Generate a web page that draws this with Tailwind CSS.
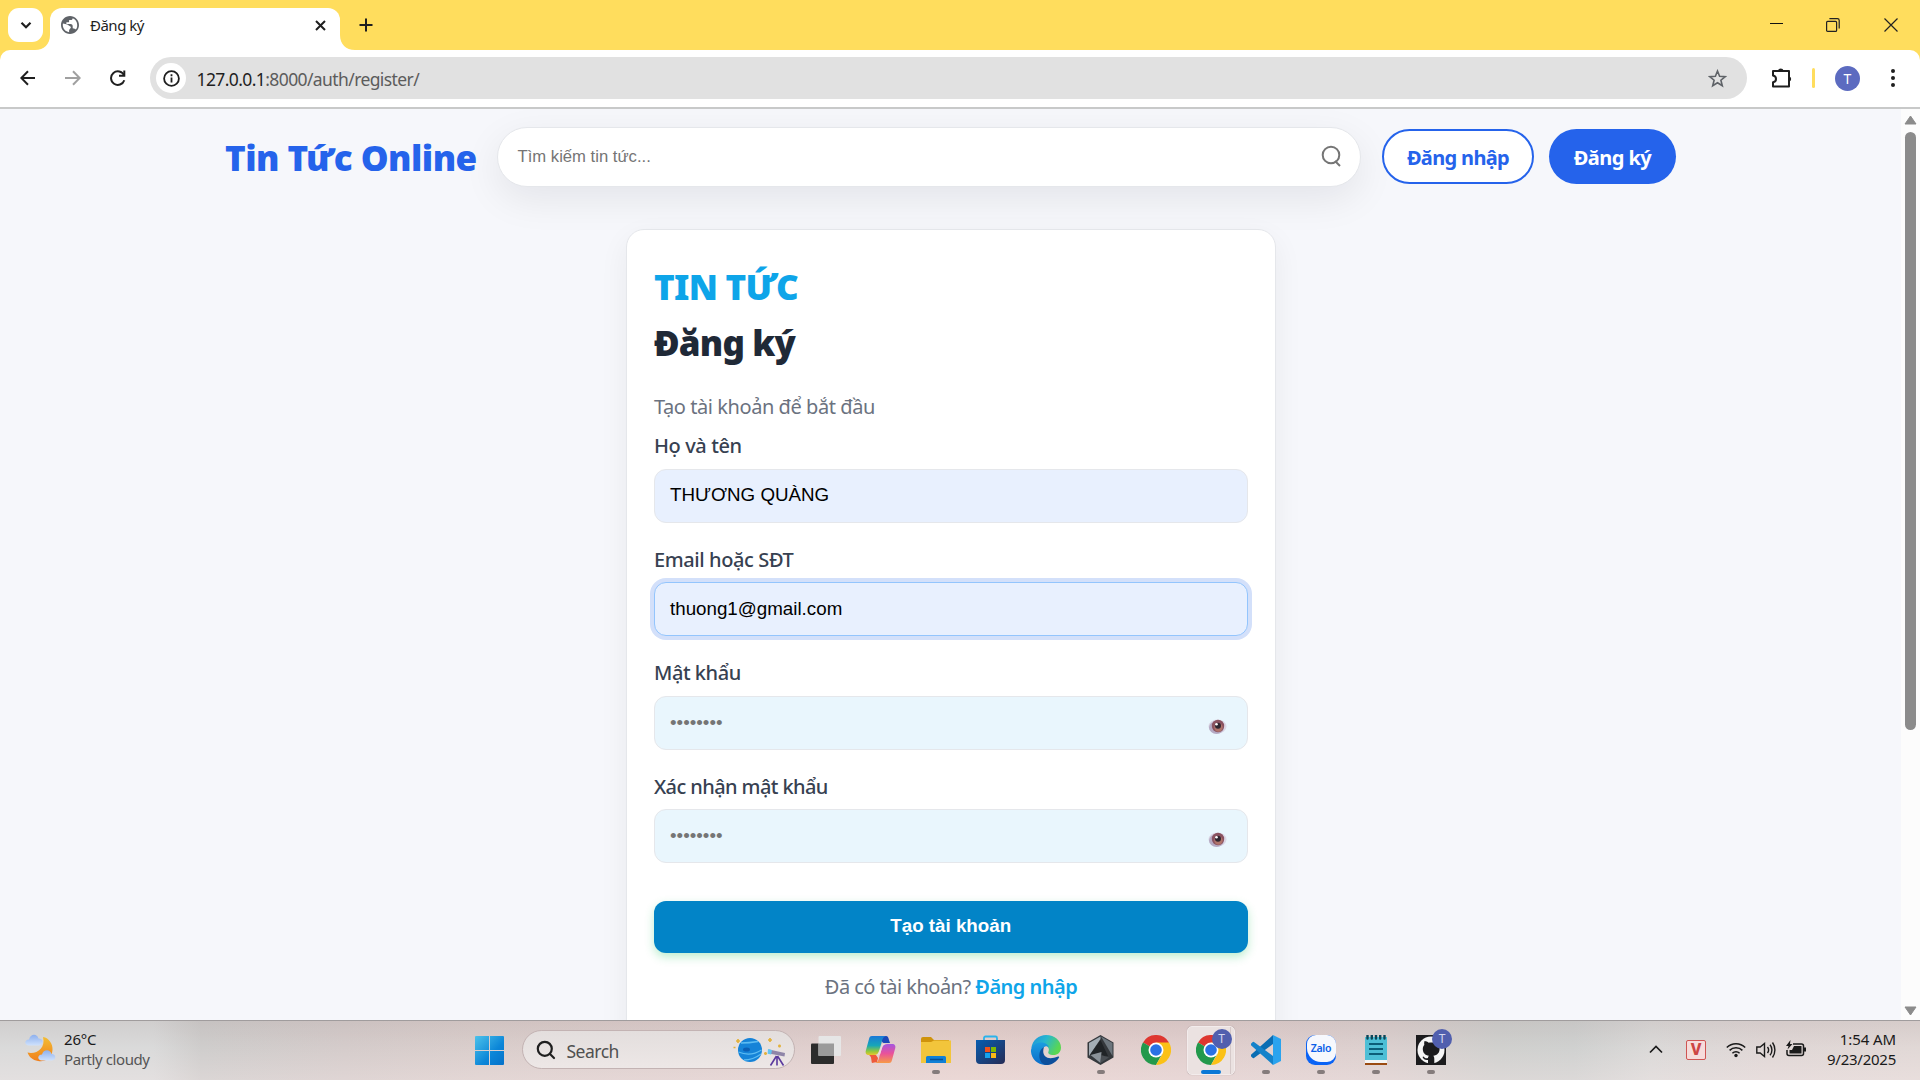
<!DOCTYPE html>
<html lang="vi">
<head>
<meta charset="utf-8">
<title>Đăng ký</title>
<script src="https://cdn.jsdelivr.net/npm/@tailwindcss/browser@4"></script>
</head>
<body class="w-[1920px] h-[1080px] overflow-hidden flex flex-col bg-[#f6f7fb] font-['Noto_Sans',sans-serif]">

<!-- Tab strip -->
<div class="h-[50px] shrink-0 bg-[#ffdd5d] flex items-start">
  <div class="ml-2 mt-2 w-[35px] h-[34px] rounded-[11px] bg-white flex items-center justify-center">
    <svg class="size-3" viewBox="0 0 12 12" fill="none" stroke="#1f1f1f" stroke-width="2.2"><path d="M1.500 3.800 6 8.200l4.500-4.400"/></svg>
  </div>
  <svg class="w-[15px] h-[15px] mt-[35px] -ml-2 shrink-0" viewBox="0 0 15 15"><path d="M15 0C15 9 9 15 0 15h15z" fill="#fff"/></svg>
  <div class="mt-[7.500px] w-[290px] h-[43px] rounded-t-[12px] bg-white flex items-start">
    <svg class="ml-[11px] mt-[8.500px] size-[18px]" viewBox="2 2 20 20"><path d="M12 2C6.480 2 2 6.480 2 12s4.480 10 10 10 10-4.480 10-10S17.520 2 12 2zm-1 17.930c-3.950-.490-7-3.850-7-7.930 0-.620.080-1.210.210-1.790L9 11.500l2.500 1.500c1.500.500 2 1.500 1 2.500l-1.500 2zM18.500 17c-.800-1-1.800-1-3.500-1.500v-2.500c0-1-1-2-2.500-2H8v-2h2c.550 0 1-.450 1-1V6.500h2c1.100 0 2-.900 2-2v.100c2.930 1.190 5 4.060 5 7.410 0 2.080-.300 3.670-1.500 4.990z" fill="#5f6368"/></svg>
    <span class="ml-[11px] mt-[7.500px] text-[15px] leading-5 tracking-[-0.500px] text-[#1f1f1f]">Đăng ký</span>
    <svg class="ml-auto mr-[14.500px] mt-[12px] size-[11px]" viewBox="0 0 11 11" stroke="#1f1f1f" stroke-width="2"><path d="m1 1 9 9M10 1l-9 9"/></svg>
  </div>
  <svg class="w-[15px] h-[15px] mt-[35px] shrink-0" viewBox="0 0 15 15"><path d="M0 0c0 9 6 15 15 15H0z" fill="#fff"/></svg>
  <svg class="ml-[4px] mt-[18px] size-[14px]" viewBox="0 0 14 14" stroke="#1f1f1f" stroke-width="2"><path d="M7 .500v13M.500 7h13"/></svg>
  <div class="ml-auto flex items-start">
    <svg class="w-[13px] h-[13px] mt-[18px]" viewBox="0 0 13 13"><path d="M0 5.500h13" stroke="#111"/></svg>
    <svg class="w-[14px] h-[14px] mt-[18px] ml-[43px]" viewBox="0 0 14 14" fill="none" stroke="#222" stroke-width="1.200"><rect x=".600" y="3.400" width="10" height="10" rx="1"/><path d="M3.400.700h8a1.800 1.800 0 0 1 1.800 1.800v8"/></svg>
    <svg class="w-[14px] h-[14px] mt-[18px] ml-[44px] mr-[22px]" viewBox="0 0 14 14" stroke="#222" stroke-width="1.200"><path d="m.500.500 13 13M13.500.500l-13 13"/></svg>
  </div>
</div>

<!-- Toolbar -->
<div class="h-[59px] shrink-0 bg-[#ffdd5d]">
  <div class="h-full bg-white rounded-t-[10px] border-b-2 border-[#c8c9c9] flex items-center pb-px">
    <svg class="ml-[20px] w-[16px] h-[16px]" viewBox="0 0 16 16" fill="none" stroke="#1f1f1f" stroke-width="2"><path d="M15 8H1.500M8 1.200 1.300 8 8 14.800"/></svg>
    <svg class="ml-[29px] w-[16px] h-[16px]" viewBox="0 0 16 16" fill="none" stroke="#a0a0a0" stroke-width="2"><path d="M0 8h14.500M8 1.200 14.700 8 8 14.800"/></svg>
    <svg class="ml-[29px] w-[16px] h-[16px]" viewBox="0 0 16 16" fill="none" stroke="#1f1f1f" stroke-width="2"><path d="M14.300 10.200A6.800 6.800 0 1 1 14 5.200"/><path d="M14.300.500v5.300H9"/></svg>
    <div class="ml-[24px] w-[1597px] h-[42px] rounded-full bg-[#e1e1e1] flex items-center">
      <div class="ml-[6px] size-[30px] rounded-full bg-white flex items-center justify-center">
        <svg class="size-[17px]" viewBox="0 0 17 17" fill="none" stroke="#1f1f1f" stroke-width="1.800"><circle cx="8.500" cy="8.500" r="7.400"/><path d="M8.500 7.500v5M8.500 4.300v1.900"/></svg>
      </div>
      <span class="ml-[10.500px] mt-[2px] text-[17.500px] leading-6 tracking-[-0.600px] text-[#5c5c5c]"><span class="text-[#1f1f1f]">127.0.0.1</span>:8000/auth/register/</span>
      <svg class="ml-auto mr-[20px] w-[19px] h-[19px]" viewBox="0 0 19 19" fill="none" stroke="#5f6368" stroke-width="1.600"><path d="m9.500 2 2.100 5.200 5.600.400-4.300 3.600 1.400 5.500-4.800-3-4.800 3 1.400-5.500L1.800 7.600l5.600-.400z"/></svg>
    </div>
    <svg class="ml-[24px] w-[22px] h-[21px]" viewBox="0 0 22 21"><path d="M2 3h16v15.500H2v-4.200c4-.500 4-6 0-6.800z" fill="none" stroke="#1f1f1f" stroke-width="2" stroke-linejoin="round"/><path d="M7 2.500a2.800 2.500 0 0 1 5.500 0zM18.500 8.500a2.700 2.700 0 0 1 0 5z" fill="#1f1f1f"/></svg>
    <div class="ml-[19px] w-[3px] h-5 rounded bg-[#ffdd5d]"></div>
    <div class="ml-[20px] size-[25px] rounded-full bg-[#5c6bc0] text-white text-[14px] leading-[25px] text-center">T</div>
    <svg class="ml-[30.500px] w-[4px] h-[18px]" viewBox="0 0 4 18" fill="#1f1f1f"><circle cx="2" cy="2" r="2"/><circle cx="2" cy="9" r="2"/><circle cx="2" cy="16" r="2"/></svg>
  </div>
</div>

<!-- Page viewport -->
<div class="h-[911px] shrink-0 flex overflow-hidden">
  <main class="w-[1901px]">
    <header class="pt-[18px] pl-[225px] flex items-start">
      <div class="w-[271.500px] pt-[9px]"><span class="text-[35px] leading-[44px] font-black text-[#2563eb] tracking-[-0.520px] whitespace-nowrap">Tin Tức Online</span></div>
      <div class="w-[864.500px] h-[60px] rounded-[30px] bg-white border border-[#e5e7eb] shadow-[0_12px_38px_rgba(2,6,23,0.08)] flex items-start">
        <span class="ml-5 mt-[17px] text-[16.670px] leading-6 text-[#757575] font-['Liberation_Sans',sans-serif]">Tìm kiếm tin tức...</span>
        <svg class="ml-auto mr-[18px] mt-[17px] w-[21px] h-[23px]" viewBox="0 0 21 23" fill="none" stroke="#757575" stroke-width="2"><circle cx="10" cy="10" r="8.300"/><path d="m14 16 5 5"/></svg>
      </div>
      <div class="ml-[21px] mt-[2px] w-[152px] h-[55px] rounded-[28px] bg-white border-2 border-[#2563eb] text-[#2563eb] flex justify-center"><span class="mt-[12.500px] text-[20px] leading-7 font-bold tracking-[-0.650px] whitespace-nowrap">Đăng nhập</span></div>
      <div class="ml-[15px] mt-[2px] w-[127px] h-[55px] rounded-[28px] bg-[#2563eb] text-white flex justify-center"><span class="mt-[14.500px] text-[20px] leading-7 font-bold tracking-[-0.550px] whitespace-nowrap">Đăng ký</span></div>
    </header>

    <section class="ml-[626px] mt-[42px] w-[650px] h-[820px] rounded-[18px] bg-white border border-[#e5e7eb] shadow-[0_10px_30px_rgba(2,6,23,0.06)] px-[27px] pt-[35px]">
      <div class="h-11"><span class="text-[35px] leading-[44px] font-black tracking-[-0.700px] text-[#0ea5e9]">TIN TỨC</span></div>
      <div class="mt-3 h-11"><span class="text-[35px] leading-[44px] font-black tracking-[-0.850px] text-[#1f2937]">Đăng ký</span></div>
      <div class="mt-7 h-[28px]"><span class="text-[20px] leading-7 tracking-[-0.440px] text-[#6b7280]">Tạo tài khoản để bắt đầu</span></div>

      <div class="mt-[11px] h-[114px] flex flex-col items-start">
        <span class="text-[20px] leading-7 font-medium tracking-[-0.400px] text-[#374151]">Họ và tên</span>
        <div class="mt-[9px] w-[593.500px] h-[54px] rounded-[12px] border border-[#e5e7eb] bg-[#e8f0fe] pl-[15px] pt-[11px]"><span class="text-[18.750px] leading-7 text-black font-['Liberation_Sans',sans-serif]">THƯƠNG QUÀNG</span></div>
      </div>
      <div class="h-[113px] flex flex-col items-start">
        <span class="text-[20px] leading-7 font-medium tracking-[-0.400px] text-[#374151]">Email hoặc SĐT</span>
        <div class="mt-[8px] w-[593.500px] h-[54px] rounded-[12px] border border-[#93c5fd] bg-[#e8f0fe] shadow-[0_0_0_4px_#d3e0fa] pl-[15px] pt-[12px]"><span class="text-[18.750px] leading-7 text-black font-['Liberation_Sans',sans-serif]">thuong1@gmail.com</span></div>
      </div>
      <div class="h-[114px] flex flex-col items-start">
        <span class="text-[20px] leading-7 font-medium tracking-[-0.450px] text-[#374151]">Mật khẩu</span>
        <div class="mt-[9px] w-[593.500px] h-[54px] rounded-[12px] border border-[#e5e7eb] bg-[#e9f6fd] pl-[15px] pr-[19.500px] flex items-start">
          <span class="mt-[12px] text-[18.750px] leading-7 text-[#757575] font-['Liberation_Sans',sans-serif]">••••••••</span>
          <svg class="ml-auto mt-[21px] w-[19px] h-[17px]" viewBox="0 0 19 17"><ellipse cx="9.500" cy="8.500" rx="9" ry="7" fill="#dcd8e6"/><ellipse cx="8.500" cy="9.500" rx="7.500" ry="6.500" fill="#b5aac4"/><circle cx="10" cy="8" r="6.200" fill="#8a5260"/><circle cx="10.500" cy="9.500" r="4.200" fill="#b0746b"/><circle cx="10" cy="7.800" r="3" fill="#2e2530"/><circle cx="8.500" cy="6.300" r="1.300" fill="#fff"/></svg>
        </div>
      </div>
      <div class="h-[90px] flex flex-col items-start">
        <span class="text-[20px] leading-7 font-medium tracking-[-0.600px] text-[#374151]">Xác nhận mật khẩu</span>
        <div class="mt-[8px] w-[593.500px] h-[54px] rounded-[12px] border border-[#e5e7eb] bg-[#e9f6fd] pl-[15px] pr-[19.500px] flex items-start">
          <span class="mt-[12px] text-[18.750px] leading-7 text-[#757575] font-['Liberation_Sans',sans-serif]">••••••••</span>
          <svg class="ml-auto mt-[21px] w-[19px] h-[17px]" viewBox="0 0 19 17"><ellipse cx="9.500" cy="8.500" rx="9" ry="7" fill="#dcd8e6"/><ellipse cx="8.500" cy="9.500" rx="7.500" ry="6.500" fill="#b5aac4"/><circle cx="10" cy="8" r="6.200" fill="#8a5260"/><circle cx="10.500" cy="9.500" r="4.200" fill="#b0746b"/><circle cx="10" cy="7.800" r="3" fill="#2e2530"/><circle cx="8.500" cy="6.300" r="1.300" fill="#fff"/></svg>
        </div>
      </div>
      <div class="mt-[38px] w-[593.500px] h-[52px] rounded-[12px] bg-[#0284c7] shadow-[0_4px_10px_rgba(34,197,94,0.3)] flex justify-center"><span class="mt-[11px] text-[18.750px] leading-7 font-bold text-white font-['Liberation_Sans',sans-serif]">Tạo tài khoản</span></div>
      <div class="mt-[20px] flex justify-center text-[20px] leading-7 tracking-[-0.520px] text-[#6b7280] whitespace-pre"><span>Đã có tài khoản? </span><span class="font-semibold text-[#0ea5e9]">Đăng nhập</span></div>
    </section>
  </main>
  <div class="w-[19px] bg-[#fcfcfc] flex flex-col items-center">
    <svg class="mt-[6px] w-[13px] h-[10px]" viewBox="0 0 13 10"><path d="M6.500 1 12 9H1z" fill="#8b8b8b" stroke="#8b8b8b" stroke-linejoin="round"/></svg>
    <div class="mt-[7px] w-[11px] h-[598px] rounded-full bg-[#8b8b8b]"></div>
    <svg class="mt-auto mb-[4px] w-[13px] h-[10px]" viewBox="0 0 13 10"><path d="M6.500 9 12 1H1z" fill="#8b8b8b" stroke="#8b8b8b" stroke-linejoin="round"/></svg>
  </div>
</div>

<!-- Taskbar -->
<div class="h-[60px] shrink-0 border-t border-[#a09c9d] bg-[linear-gradient(180deg,rgba(120,100,100,0.1)_0%,rgba(255,240,240,0)_45%,rgba(255,240,240,0.25)_100%),linear-gradient(90deg,#dadada_0%,#dadada_8%,#cfcdcc_10.5%,#d5cccb_18%,#dacecc_25%,#dfcfce_40%,#e4d0cd_50%,#e1cfce_62%,#dcd0cf_72%,#d0d0ce_78%,#d0d1d0_82%,#dbd9d8_86%,#e0d7d6_92%,#e1d8d6_100%)] flex items-start">
  <svg class="ml-[25px] mt-[12px] w-[31px] h-[30px] shrink-0" viewBox="0 0 31 30"><defs><linearGradient id="mo" x1="0" y1="0" x2="0" y2="1"><stop offset="0" stop-color="#f3bd33"/><stop offset="1" stop-color="#f07f1c"/></linearGradient><linearGradient id="cl" x1="0" y1="0" x2="0" y2="1"><stop offset="0" stop-color="#8db0ee"/><stop offset="1" stop-color="#cfe1fc"/></linearGradient></defs><path d="M18 4C24 5 28 11 27.500 17 27 25 20 29.500 13 28 7.500 27 4 24 2.500 19.500 11 21.500 21 16 18 4z" fill="url(#mo)"/><path d="M4 12.500c-5 0-5-6 0-6C5 1 12 0 13.500 5.500c6 0 5 7 0 7z" fill="url(#cl)"/><path d="M17 27.500c-5 0-5-6 0-6 1-5 8-6 9.500-.500 5 0 5 6.500 0 6.500z" fill="url(#cl)"/></svg>
  <div class="ml-[8px] mt-[8px] w-[111px] flex flex-col items-start text-[15px] leading-5 whitespace-nowrap"><span class="tracking-[-0.200px] text-[#1a1a1a]">26°C</span><span class="tracking-[-0.400px] text-[#555]">Partly cloudy</span></div>

  <svg class="ml-[300px] mt-[15px] w-[29px] h-[29px] shrink-0" viewBox="0 0 29 29"><defs><linearGradient id="wi" x1="0" y1="0" x2="1" y2="1"><stop offset="0" stop-color="#4cc2ea"/><stop offset=".6" stop-color="#0b86d8"/><stop offset="1" stop-color="#0471c9"/></linearGradient></defs><path d="M0 1a1 1 0 0 1 1-1h13v14H0zM15 0h13a1 1 0 0 1 1 1v13H15zM0 15h14v14H1a1 1 0 0 1-1-1zM15 15h14v13a1 1 0 0 1-1 1H15z" fill="url(#wi)"/></svg>
  <div class="ml-[18px] mt-[9px] w-[273px] h-[39px] shrink-0 rounded-full bg-[linear-gradient(180deg,#e3dedd,#ede7e6)] border border-[#c3b3b3] flex items-start">
    <svg class="ml-[13px] mt-[9px] size-[20px]" viewBox="0 0 20 20" fill="none" stroke="#1f1f1f" stroke-width="2.200" stroke-linecap="round"><circle cx="8.800" cy="8.800" r="7"/><path d="m14 14 4 4"/></svg>
    <span class="ml-[10.500px] mt-[8px] text-[17.500px] leading-6 tracking-[-0.500px] text-[#505050]">Search</span>
    <svg class="ml-auto mr-[8px] mt-[6px] w-[54px] h-[29px]" viewBox="0 0 54 29"><circle cx="18" cy="13" r="12" fill="#1583d8"/><path d="M9 6q8 0 17-1.500M6.500 15q12 5 23-2M12 23q9 0 17-6" stroke="#5dbcf2" stroke-width="1.300" fill="none"/><ellipse cx="14.500" cy="12.500" rx="3.500" ry="2" fill="#0b5fb5"/><path d="M4 4h4M6 2v4M1.500 10.500h2M36 3h4M38 1v4M46 9h3M47.500 7.500v3M32 16.500h3M33.500 15v3" stroke="#e3b23c" stroke-width="1.700"/><path d="m37 12.500 16 3.500-.500 3.500L37 16.500z" fill="#8f86a8"/><path d="m36 12 4 1-.800 4.500-3.600-.800z" fill="#63c4f0"/><path d="M45 19v9.500M44.500 19l-6 9.500M45.500 19l6 9.500" stroke="#5b3a9e" stroke-width="1.600"/></svg>
  </div>

  <!-- Pinned apps, one 55px cell each -->
  <div class="ml-[3px] flex h-[59px] shrink-0">
    <div class="w-[55px] pt-[15px] flex flex-col items-center"><svg class="w-[30px] h-[30px]" viewBox="0 0 30 30"><rect x="0" y="7.500" width="23" height="20.500" rx="1" fill="#2c2c2c"/><rect x="7.500" y="0" width="22.500" height="20" rx="1" fill="#e6e6e6"/><path d="M7.500 7.500H23V20H7.500z" fill="#9b9b9b"/></svg></div>
    <div class="w-[55px] pt-[14px] flex flex-col items-center"><svg class="w-[31px] h-[29px]" viewBox="0 0 31 29"><defs><linearGradient id="ca" x1="0" y1="0" x2="0" y2="1"><stop offset="0" stop-color="#1a78d8"/><stop offset=".5" stop-color="#17a6b8"/><stop offset=".8" stop-color="#8fc83e"/><stop offset="1" stop-color="#e8c62a"/></linearGradient><linearGradient id="cb" x1="0" y1="0" x2="0" y2="1"><stop offset="0" stop-color="#a557e0"/><stop offset=".5" stop-color="#e9529a"/><stop offset="1" stop-color="#f79a46"/></linearGradient></defs><path d="M18 1h3c2 0 2.500 2 3 4l1 3h-6c-3 0-3-7-1-7z" fill="#1b48b8"/><path d="M7 28c-1-3 0-6-3-8h7l2 3-1 4z" fill="#ee5a3b"/><path d="M7 1h14c-3 1-3.500 3-4.500 7l-2.500 8c-1 3-2 4-5 4H4c-3 0-4-2-3-5L4 4c.5-2 1-3 3-3z" fill="url(#ca)"/><path d="M24 28H10c3-1 3.500-3 4.500-7l2.500-8c1-3 2-4 5-4h5c3 0 4 2 3 5l-3 11c-.5 2-1 3-3 3z" fill="url(#cb)"/><path d="M17.500 9h4.500c-3 0-4 1-5 4l-2 6.500h-4.500c2 0 3-1 3.500-3z" fill="#ecdcdc"/></svg></div>
    <div class="w-[55px] pt-[15px] flex flex-col items-center"><svg class="w-[30px] h-[29px]" viewBox="0 0 30 29"><path d="M0 3a2 2 0 0 1 2-2h8l3 3h15v10H0z" fill="#cf930c"/><path d="M0 6h10l3-1.500h17V27H0z" fill="#f2c53b"/><path d="M5 27v-5.500A1.500 1.500 0 0 1 6.500 20h17a1.500 1.500 0 0 1 1.500 1.500V27z" fill="#1080d6"/><path d="M9 23.500h13" stroke="#0a4f92" stroke-width="1.500"/></svg><div class="mt-[5px] w-2 h-1 rounded-full bg-[#857c7c]"></div></div>
    <div class="w-[55px] pt-[14px] flex flex-col items-center"><svg class="w-[29px] h-[30px]" viewBox="0 0 29 30"><defs><linearGradient id="st" x1="0" y1="0" x2="1" y2="1"><stop offset="0" stop-color="#075db0"/><stop offset="1" stop-color="#272c55"/></linearGradient></defs><path d="M8 6V3a1.500 1.500 0 0 1 1.500-1.500h10A1.500 1.500 0 0 1 21 3v3" fill="none" stroke="#2bb3ec" stroke-width="1.800"/><path d="M0 5h29v20a4 4 0 0 1-4 4H4a4 4 0 0 1-4-4z" fill="url(#st)"/><path d="M9 12h5v5H9z" fill="#f1511b"/><path d="M15 12h5v5h-5z" fill="#80b900"/><path d="M9 18h5v5H9z" fill="#14a3ee"/><path d="M15 18h5v5h-5z" fill="#fbb916"/></svg></div>
    <div class="w-[55px] pt-[14px] flex flex-col items-center"><svg class="w-[30px] h-[30px]" viewBox="0 0 30 30"><defs><linearGradient id="ea" x1="0" y1="0" x2="1" y2=".4"><stop offset="0" stop-color="#1e8fdc"/><stop offset=".5" stop-color="#27b7cf"/><stop offset="1" stop-color="#5ad653"/></linearGradient><linearGradient id="eb" x1="0" y1="0" x2="0" y2="1"><stop offset="0" stop-color="#1b9de0"/><stop offset="1" stop-color="#0b6cc9"/></linearGradient></defs><path d="M.300 13C1.500 5 8 0 15 0c9 0 15 6 15 12.500 0 5-3.500 7.500-7.500 7.500-4 0-6-1.500-5-3.500 1.500-3-1-6.500-6-6.500-5 0-8 1-11.200 3z" fill="url(#ea)"/><path d="M0 15C1 10 5 7.500 10 7.500c4 0 7 2 8 4.500-3-2-7 0-7 5 0 7 5 10 9 10.500C18 29.500 16 30 14 30 6 29.500-.500 23 0 15z" fill="url(#eb)"/><path d="M13 12c-3 9 3 14 14 9.500 1-.300 1.500.300 1 1C25.500 27 20 30.500 15 30 7 29 6 15 13 12z" fill="#0c4f9c"/></svg></div>
    <div class="w-[55px] pt-[14px] flex flex-col items-center"><svg class="w-[27px] h-[30px]" viewBox="0 0 27 30"><path d="m13.500 0 13 7.500v15l-13 7.500-13-7.500v-15z" fill="#34383c"/><path d="M13.500 1.500 2 8v13l11.500-17z" fill="#a3adb5"/><path d="M14 1.500 25.500 8v13z" fill="#6d767d"/><path d="m13.500 5 7.500 16-18-1z" fill="#202427"/><path d="m3.500 20 11-3-1 11z" fill="#8a9299"/><path d="m13.500 28 .5-8 8 2.500z" fill="#4a4f54"/></svg><div class="mt-[5px] w-2 h-1 rounded-full bg-[#857c7c]"></div></div>
    <div class="w-[55px] pt-[14px] flex flex-col items-center"><svg class="w-[30px] h-[30px]" viewBox="0 0 30 30"><path d="M15 15 2 7.500A15 15 0 0 1 28 7.500z" fill="#de3730"/><path d="M15 15 2 7.500A15 15 0 0 0 15 30l6-11z" fill="#23994c"/><path d="M15 7.500h13A15 15 0 0 1 15 30l6.500-11z" fill="#fbc116"/><circle cx="15" cy="15" r="7.500" fill="#fff"/><circle cx="15" cy="15" r="5.800" fill="#2a72e4"/></svg></div>
    <div class="w-[55px] pt-[5px] flex flex-col items-center">
      <div class="relative w-[48px] h-[49px] rounded-[5px] bg-[#ebe2e1] border border-[#f3ecec] shadow-[0_0_1px_#a99] flex flex-col items-center pt-[8px]"><div class="absolute right-[3px] top-0 w-px h-[47px] bg-[#d5c9c9]"></div><svg class="w-[30px] h-[30px] shrink-0" viewBox="0 0 30 30"><path d="M15 15 2 7.500A15 15 0 0 1 28 7.500z" fill="#de3730"/><path d="M15 15 2 7.500A15 15 0 0 0 15 30l6-11z" fill="#23994c"/><path d="M15 7.500h13A15 15 0 0 1 15 30l6.500-11z" fill="#fbc116"/><circle cx="15" cy="15" r="7.500" fill="#fff"/><circle cx="15" cy="15" r="5.800" fill="#2a72e4"/></svg><div class="mt-[5px] w-5 h-1 rounded-full bg-[#0a78d6]"></div>
      <div class="absolute left-[24px] top-[2px] size-5 rounded-full bg-[#515fae] text-[#d3d7ee] text-[12px] leading-5 text-center">T</div></div></div>
    <div class="w-[55px] pt-[14px] flex flex-col items-center"><svg class="w-[30px] h-[30px]" viewBox="0 0 30 30"><path d="M0 19.800 22 0v9L3 23q-.800.500-1.500-.200L.200 21.500q-.800-.900-.200-1.700z" fill="#0a6db3"/><path d="M0 10.200 22 30v-9L3 7q-.800-.500-1.500.200L.200 8.500q-.800.900-.200 1.700z" fill="#1482ca"/><path d="M22 0 30 4v22l-8 4z" fill="#2aa3ee"/></svg><div class="mt-[5px] w-2 h-1 rounded-full bg-[#857c7c]"></div></div>
    <div class="w-[55px] pt-[14px] flex flex-col items-center"><div class="size-[30px] rounded-[9px] bg-[#0a63f5] flex justify-end"><div class="w-[29px] h-[27px] rounded-[9px] rounded-bl-[14px] bg-[#f6f8fd] text-[#0b5fe8] text-[10.500px] font-semibold leading-[27px] text-center tracking-[-0.300px]">Zalo</div></div><div class="mt-[5px] w-2 h-1 rounded-full bg-[#857c7c]"></div></div>
    <div class="w-[55px] pt-[14px] flex flex-col items-center"><svg class="w-[24px] h-[30px]" viewBox="0 0 24 30"><path d="M1 2h22v25H1z" fill="#4dbfd6"/><path d="M1 25h22v3H1z" fill="#f4f4f4"/><path d="M1 28h22v2H1z" fill="#9a4b12"/><path d="M5 9h14M5 14h14M5 19h14" stroke="#0c5e78" stroke-width="1.800"/><path d="M3.500.500v3M7.800.500v3M12 .500v3M16.200.500v3M20.500.500v3" stroke="#0c4658" stroke-width="2.400" stroke-linecap="round"/></svg><div class="mt-[5px] w-2 h-1 rounded-full bg-[#857c7c]"></div></div>
    <div class="relative w-[55px] pt-[14px] flex flex-col items-center"><svg class="w-[30px] h-[30px]" viewBox="0 0 30 30"><path d="M0 0h30v30H0z" fill="#1b1b1d"/><circle cx="15" cy="15" r="13.500" fill="#f5f5f5"/><path d="M12 30v-5c-3 .500-4.500-1-5.500-3l1-.500c1.500 2 3 2 4.500 1.500 0-1 .500-1.800 1-2.200-4-.600-6.200-3-6.200-6.800 0-1.800.500-3 1.500-4-.300-1.300-.200-2.700.200-4 1.700 0 3 .900 4.200 1.700 1.500-.400 3.500-.400 5 0 1.200-.800 2.500-1.700 4.200-1.700.400 1.300.500 2.700.200 4 1 1 1.500 2.200 1.500 4 0 3.800-2.300 6.200-6.300 6.800.700.700 1 1.700 1 3V30z" fill="#1b1b1d"/></svg><div class="mt-[5px] w-2 h-1 rounded-full bg-[#857c7c]"></div>
      <div class="absolute left-[29px] top-[8px] size-5 rounded-full bg-[#515fae] text-[#d3d7ee] text-[12px] leading-5 text-center">T</div></div>
  </div>

  <!-- System tray -->
  <div class="ml-auto flex items-start pr-[24px]">
    <svg class="mt-[24px] w-[14px] h-[9px]" viewBox="0 0 14 9" fill="none" stroke="#1a1a1a" stroke-width="1.700"><path d="m1 7.500 6-6 6 6"/></svg>
    <div class="ml-[23px] mt-[19px] size-5 rounded-[2px] border-[1.500px] border-[#cf5553] bg-[#f6dcdb] text-[#cd4543] text-[16px] leading-[17px] font-extrabold text-center">V</div>
    <svg class="ml-[20px] mt-[21px] w-[20px] h-[16px]" viewBox="0 0 20 16" fill="none" stroke="#1a1a1a" stroke-width="1.500"><path d="M.800 5.500a13 13 0 0 1 18.400 0M3.600 8.400a9 9 0 0 1 12.800 0M6.400 11.200a5 5 0 0 1 7.200 0"/><circle cx="10" cy="13.500" r="1.700" fill="#1a1a1a" stroke="none"/></svg>
    <svg class="ml-[10px] mt-[20px] w-[20px] h-[18px]" viewBox="0 0 20 18" fill="none" stroke="#1a1a1a" stroke-width="1.400"><path d="M.800 6v6h3.400L8.500 15.500v-13L4.200 6zM11.500 6a5 5 0 0 1 0 6M14 3.800a8 8 0 0 1 0 10.400M16.500 1.500c3.200 4.500 3.200 10.500 0 15"/></svg>
    <svg class="ml-[10px] mt-[19px] w-[20px] h-[17px]" viewBox="0 0 20 17"><path d="M7 4h8.500a2 2 0 0 1 2 2v7.500a2 2 0 0 1-2 2H3a2 2 0 0 1-2-2V10" fill="none" stroke="#1a1a1a" stroke-width="1.500"/><path d="M8 6h7.500v7.500H3.500V10H6zM18 7.500h2v4h-2zM4.500 0 0 6h2.500L1.500 9.500 6.500 4H4z" fill="#1a1a1a"/></svg>
    <div class="w-[90px] mt-[8px] flex flex-col items-end text-[15px] leading-5 text-[#1a1a1a]"><span class="tracking-[-0.100px]">1:54 AM</span><span class="tracking-[-0.250px]">9/23/2025</span></div>
  </div>
</div>
</body>
</html>
